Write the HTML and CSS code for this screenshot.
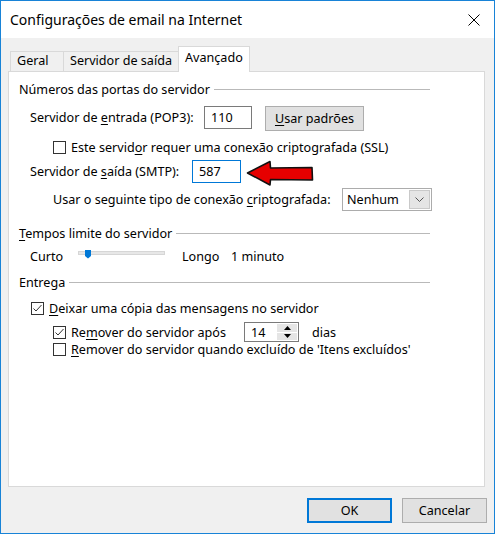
FILE: index.html
```html
<!DOCTYPE html>
<html lang="pt">
<head>
    <meta charset="UTF-8">
    <title>Configurações de email na Internet</title>
    <link rel="stylesheet" href="styles.css">
</head>
<body>
<div class="window">
    <div class="titlebar">
        <span class="title">Configurações de email na Internet</span>
        <svg class="close" width="12" height="12" viewBox="0 0 12 12"><path d="M0.5 0.5 L11.5 11.5 M11.5 0.5 L0.5 11.5" stroke="#000" stroke-width="1"/></svg>
    </div>
    <div class="client">
        <div class="tabs">
            <div class="tab tab-geral">Geral</div>
            <div class="tab tab-saida">Servidor de saída</div>
            <div class="tab tab-avancado active">Avançado</div>
        </div>
        <div class="panel">
            <div class="legend legend-portas"><span>Números das portas do servidor</span><span class="rule"></span></div>

            <div class="row row-pop">
                <span class="label label-pop">Servidor de <u>e</u>ntrada (POP3):</span>
                <div class="textbox tb-pop">110</div>
                <div class="btn btn-padroes"><u>U</u>sar padrões</div>
            </div>

            <div class="row row-check row-ssl">
                <svg class="checkbox" width="13" height="13" viewBox="0 0 13 13"><rect x="0.5" y="0.5" width="12" height="12" fill="#fff" stroke="#333"/></svg>
                <span>Este servid<u>o</u>r requer uma conexão criptografada (SSL)</span>
            </div>

            <div class="row row-smtp">
                <span class="label label-smtp">Servidor de <u>s</u>aída (SMTP):</span>
                <div class="textbox tb-smtp">587</div>
                <!-- seta vermelha de destaque -->
                <svg class="arrow" width="70" height="28" viewBox="0 0 70 28">
                    <path d="M1.5 14 L24 2.5 L24.5 9 L66 8.5 L66.5 21 L24.5 20.5 L24 26 Z" fill="#e60000" stroke="#111" stroke-width="1.6" stroke-linejoin="round"/>
                </svg>
            </div>

            <div class="row row-enc">
                <span class="label label-enc">Usar o seguinte tipo de conexão <u>c</u>riptografada:</span>
                <div class="select">
                    <span class="select-text">Nenhum</span>
                    <span class="select-btn">
                        <svg width="9" height="5" viewBox="0 0 9 5"><path d="M0.5 0.5 L4.5 4.5 L8.5 0.5" fill="none" stroke="#555" stroke-width="1"/></svg>
                    </span>
                </div>
            </div>

            <div class="legend legend-tempos"><span><u>T</u>empos limite do servidor</span><span class="rule"></span></div>

            <div class="row row-slider">
                <span class="slider-min">Curto</span>
                <svg class="slider" width="87" height="17" viewBox="0 0 87 17">
                    <rect x="0.5" y="3.5" width="86" height="3" fill="#e7e7e7" stroke="#d6d6d6"/>
                    <path d="M7 2 H13 V8 L10 10.5 L7 8 Z" fill="#0078d7"/>
                </svg>
                <span class="slider-max">Longo</span>
                <span>1 minuto</span>
            </div>

            <div class="legend legend-entrega"><span>Entrega</span><span class="rule"></span></div>

            <div class="row row-check row-copia">
                <svg class="checkbox" width="13" height="13" viewBox="0 0 13 13"><rect x="0.5" y="0.5" width="12" height="12" fill="#fff" stroke="#333"/><path d="M2.5 6.5 L5 9 L10.5 3" fill="none" stroke="#333" stroke-width="1"/></svg>
                <span><u>D</u>eixar uma cópia das mensagens no servidor</span>
            </div>

            <div class="row row-check row-remover">
                <svg class="checkbox" width="13" height="13" viewBox="0 0 13 13"><rect x="0.5" y="0.5" width="12" height="12" fill="#fff" stroke="#333"/><path d="M2.5 6.5 L5 9 L10.5 3" fill="none" stroke="#333" stroke-width="1"/></svg>
                <span class="label-remover">Re<u>m</u>over do servidor após</span>
                <div class="spin">
                    <span class="spin-text">14</span>
                    <span class="spin-btns">
                        <span class="spin-btn"><svg width="7" height="4" viewBox="0 0 7 4"><path d="M0 4 L3.5 0 L7 4 Z" fill="#000"/></svg></span>
                        <span class="spin-btn"><svg width="7" height="4" viewBox="0 0 7 4"><path d="M0 0 L3.5 4 L7 0 Z" fill="#000"/></svg></span>
                    </span>
                </div>
                <span class="dias">dias</span>
            </div>

            <div class="row row-check row-excluidos">
                <svg class="checkbox" width="13" height="13" viewBox="0 0 13 13"><rect x="0.5" y="0.5" width="12" height="12" fill="#fff" stroke="#333"/></svg>
                <span><u>R</u>emover do servidor quando excluído de 'Itens excluídos'</span>
            </div>
        </div>

        <div class="buttons">
            <div class="btn btn-default">OK</div>
            <div class="btn">Cancelar</div>
        </div>
    </div>
</div>
</body>
</html>
```

FILE: styles.css
```css
body {
    margin: 0;
    font-family: "Noto Sans", sans-serif;
    font-size: 12.6px;
    color: #000;
}
u {
    text-decoration-thickness: 1px;
    text-underline-offset: 2px;
}
.window {
    width: 495px;
    height: 534px;
    box-sizing: border-box;
    border: 1px solid #1883d7;
    display: flex;
    flex-direction: column;
    background: #f0f0f0;
}
.titlebar {
    height: 37px;
    flex: none;
    background: #fff;
    display: flex;
    align-items: center;
    justify-content: space-between;
    padding: 0 14px 0 9px;
}
.title {
    font-size: 14px;
}
.client {
    flex: 1;
    padding-top: 8px;
    display: flex;
    flex-direction: column;
}

/* tabs */
.tabs {
    display: flex;
    align-items: flex-end;
    height: 25px;
    margin-left: 9px;
}
.tab {
    box-sizing: border-box;
    height: 20px;
    border: 1px solid #d9d9d9;
    border-bottom: none;
    padding-left: 6px;
    line-height: 18px;
    background: #f0f0f0;
    margin-right: -1px;
    white-space: nowrap;
}
.tab-geral { width: 54px; }
.tab-saida { width: 116px; }
.tab-avancado { width: 72px; }
.tab.active {
    height: 26px;
    margin-bottom: -1px;
    padding-top: 2px;
    background: #fff;
    position: relative;
    z-index: 1;
}

.panel {
    box-sizing: border-box;
    margin-left: 7px;
    width: 477px;
    height: 416px;
    border: 1px solid #d9d9d9;
    background: #fff;
    padding: 9px 0 0 10px;
}

.legend {
    display: flex;
    align-items: center;
    width: 411px;
    height: 17px;
    white-space: nowrap;
}
.legend .rule {
    flex: 1;
    height: 1px;
    background: #b9b9b9;
    margin-left: 4px;
}
.legend-tempos { margin-top: 14px; }
.legend-entrega { margin-top: 9px; }

.row {
    display: flex;
    align-items: center;
    white-space: nowrap;
}
.row-check {
    height: 15px;
}
.row-check .checkbox {
    flex: none;
    margin-right: 5px;
}

.row-pop {
    margin-top: 8px;
    margin-left: 11px;
    height: 25px;
    align-items: flex-start;
}
.label { line-height: 23px; }
.label-pop { width: 174px; }
.label-smtp { width: 162px; }
.label-enc { width: 289px; }

.textbox {
    box-sizing: border-box;
    height: 23px;
    border: 1px solid #7a7a7a;
    padding-left: 6px;
    line-height: 21px;
    background: #fff;
}
.tb-pop { width: 48px; }
.tb-smtp {
    width: 49px;
    border-color: #0078d7;
}

.btn {
    box-sizing: border-box;
    width: 85px;
    height: 25px;
    border: 1px solid #adadad;
    background: #e1e1e1;
    text-align: center;
    line-height: 23px;
}
.btn-padroes {
    width: 99px;
    margin-left: 13px;
}
.btn-default {
    border: 2px solid #0078d7;
    line-height: 21px;
}

.row-ssl {
    margin-top: 9px;
    margin-left: 34px;
}
.row-smtp {
    margin-top: 5px;
    margin-left: 11px;
    height: 23px;
}
.arrow {
    flex: none;
    margin-left: 5px;
    margin-top: 2px;
}
.row-enc {
    margin-top: 5px;
    margin-left: 34px;
    height: 23px;
}

.select {
    box-sizing: border-box;
    width: 90px;
    height: 23px;
    border: 1px solid #acacac;
    display: flex;
    padding: 1px;
}
.select-text {
    flex: 1;
    padding-left: 3px;
    line-height: 19px;
}
.select-btn {
    box-sizing: border-box;
    width: 21px;
    background: #e5e5e5;
    border: 1px solid #c9c9c9;
    display: flex;
    align-items: center;
    justify-content: center;
}

.row-slider {
    margin-top: 6px;
    margin-left: 11px;
    height: 17px;
}
.slider-min { width: 48px; }
.slider { flex: none; }
.slider-max {
    width: 49px;
    margin-left: 17px;
}

.row-copia {
    margin-top: 10px;
    margin-left: 12px;
}
.row-remover {
    margin-top: 6px;
    margin-left: 34px;
    height: 20px;
}
.label-remover { width: 173px; }
.spin {
    box-sizing: border-box;
    width: 55px;
    height: 20px;
    border: 1px solid #7a7a7a;
    display: flex;
}
.spin-text {
    flex: 1;
    padding-left: 6px;
    padding-top: 1px;
    line-height: 18px;
}
.spin-btns {
    width: 20px;
    display: flex;
    flex-direction: column;
    margin: 1px 1px 1px 0;
}
.spin-btn {
    flex: 1;
    background: #e5e5e5;
    display: flex;
    align-items: center;
    justify-content: center;
}
.spin-btn + .spin-btn {
    border-top: 1px solid #fff;
}
.dias { margin-left: 13px; }
.row-excluidos {
    margin-left: 34px;
}

.buttons {
    display: flex;
    justify-content: flex-end;
    gap: 10px;
    margin-top: 11px;
    padding-right: 7px;
}
```
